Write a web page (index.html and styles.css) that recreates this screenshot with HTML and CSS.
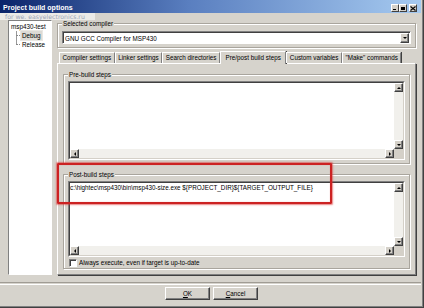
FILE: index.html
```html
<html>
  <head>
    <title>Project build options</title>
    <meta charset="UTF-8" />
    <link rel="stylesheet" href="styles.css">
  </head>
  <body>
    <div class="window">
      <div class="titlebar">
        <span class="title">Project build options</span>
        <div class="controls">
          <span class="ctl ctl-min"></span>
          <span class="ctl ctl-max"></span>
          <span class="ctl ctl-close">
            <svg width="6" height="5" viewBox="0 0 6 5"><path d="M0.5 0.5 L5.5 4.5 M5.5 0.5 L0.5 4.5" stroke="#000" stroke-width="1.1" /></svg>
          </span>
        </div>
      </div>

      <div class="client">
        <div class="main">
          <div class="tree">
            <div class="node root">msp430-test</div>
            <div class="children">
              <div class="node leaf"><span class="selected">Debug</span></div>
              <div class="node leaf"><span>Release</span></div>
            </div>
          </div>

          <div class="right">
            <div class="group compiler">
              <span class="legend">Selected compiler</span>
              <div class="combo">
                <span class="combo-text">GNU GCC Compiler for MSP430</span>
                <span class="arrow-btn down"></span>
              </div>
            </div>

            <div class="tabs">
              <span class="tab">Compiler settings</span>
              <span class="tab">Linker settings</span>
              <span class="tab">Search directories</span>
              <span class="tab active">Pre/post build steps</span>
              <span class="tab">Custom variables</span>
              <span class="tab">"Make" commands</span>
            </div>

            <div class="panel">
              <div class="group pre">
                <span class="legend">Pre-build steps</span>
                <div class="textbox grow">
                  <div class="textbox-inner">
                    <div class="text"></div>
                    <div class="vscroll">
                      <span class="arrow-btn up"></span>
                      <span class="track"></span>
                      <span class="arrow-btn down"></span>
                    </div>
                    <div class="hscroll">
                      <span class="arrow-btn left"></span>
                      <span class="track"></span>
                      <span class="arrow-btn right"></span>
                    </div>
                    <div class="corner"></div>
                  </div>
                </div>
              </div>

              <div class="group post">
                <span class="legend">Post-build steps</span>
                <div class="textbox fixed">
                  <div class="textbox-inner">
                    <div class="text">c:\hightec\msp430\bin\msp430-size.exe ${PROJECT_DIR}${TARGET_OUTPUT_FILE}</div>
                    <div class="vscroll">
                      <span class="arrow-btn up"></span>
                      <span class="track"></span>
                      <span class="arrow-btn down"></span>
                    </div>
                    <div class="hscroll">
                      <span class="arrow-btn left"></span>
                      <span class="track"></span>
                      <span class="arrow-btn right"></span>
                    </div>
                    <div class="corner"></div>
                  </div>
                </div>
                <label class="check">
                  <span class="box"></span>
                  Always execute, even if target is up-to-date
                </label>
              </div>
            </div>
          </div>
        </div>

        <div class="separator"></div>

        <div class="buttons">
          <span class="button"><u>O</u>K</span>
          <span class="button"><u>C</u>ancel</span>
        </div>
      </div>

      <!-- annotations on top of the screenshot -->
      <div class="watermark">for we. easyelectronics.ru</div>
      <div class="highlight"></div>
    </div>
  </body>
</html>
```

FILE: styles.css
```css
body {
  margin: 0;
  background-color: #d4d0c8;
  font-family: "Liberation Sans", Arial, sans-serif;
  font-size: 6.3px;
  color: #000;
}

.window {
  position: relative;
  width: 424px;
  height: 308px;
  box-sizing: border-box;
  display: flex;
  flex-direction: column;
  background-color: #d6d3cc;
  border-right: 1px solid #404040;
  border-bottom: 1px solid #404040;
  padding-right: 2px;
  box-shadow: inset -1px -1px #808080;
  overflow: hidden;
}

/* title bar */

.titlebar {
  height: 13px;
  flex: none;
  display: flex;
  align-items: center;
  padding: 0 4px 0 3px;
  background: linear-gradient(to right, #0a246a 0%, #5a7fc0 45%, #a6caf0 100%);
}

.title {
  color: #fff;
  font-weight: bold;
  font-size: 7px;
  padding-top: 1px;
}

.controls {
  margin-left: auto;
  display: flex;
  align-self: flex-end;
  margin-bottom: 1px;
}

.ctl {
  width: 8px;
  height: 8px;
  box-sizing: border-box;
  background-color: #d4d0c8;
  border: 1px solid;
  border-color: #fff #404040 #404040 #fff;
  display: flex;
  align-items: center;
  justify-content: center;
}

.ctl-min::after {
  content: "";
  width: 3px;
  height: 1px;
  background: #000;
  margin-top: 3px;
  margin-right: 1px;
}

.ctl-max::after {
  content: "";
  width: 4px;
  height: 3px;
  border: 1px solid #000;
  border-top-width: 2px;
  box-sizing: border-box;
}

.ctl-close {
  margin-left: 2px;
}

/* client area */

.client {
  flex: 1;
  display: flex;
  flex-direction: column;
  padding: 7px 5px 7px 8px;
}

.main {
  flex: 1;
  display: flex;
  gap: 5px;
}

.tree {
  width: 44px;
  box-sizing: border-box;
  background-color: #fff;
  border: 1px solid;
  border-color: #808080 #fff #fff #808080;
  padding: 1px 0 0 2px;
}

.node {
  line-height: 9px;
  white-space: nowrap;
}

.children {
  margin-left: 5px;
  background: linear-gradient(#999, #999) no-repeat 0 0 / 1px calc(100% - 4px);
}

.leaf {
  display: flex;
  align-items: center;
}

.leaf::before {
  content: "";
  width: 4px;
  border-top: 1px dotted #888;
  margin-right: 1px;
}

.leaf span {
  padding: 0 1px;
}

.selected {
  background-color: #dcdad5;
  outline: 1px solid #e9e7e2;
}

.right {
  flex: 1;
  display: flex;
  flex-direction: column;
}

/* group boxes */

.group {
  display: flex;
  flex-direction: column;
  border: 1px solid #a9a59d;
  box-shadow: inset 1px 1px #fff, 1px 1px #fff;
  padding: 0 4px 3px 4px;
}

.legend {
  align-self: flex-start;
  margin: -4px 0 0 0;
  padding: 0 1px;
  line-height: 8px;
  background-color: #d6d3cc;
}

.compiler {
  margin-top: 3px;
}

.combo {
  margin-top: 3px;
  height: 13px;
  box-sizing: border-box;
  display: flex;
  align-items: center;
  background-color: #fff;
  border: 1px solid;
  border-color: #808080 #fff #fff #808080;
  box-shadow: inset 1px 1px #404040;
  padding: 1px 1px 0 2px;
}

.combo-text {
  flex: 1;
}

.combo .arrow-btn {
  height: 10px;
  margin-top: 0;
}

/* tabs */

.tabs {
  margin-top: 3px;
  height: 12px;
  display: flex;
  align-items: flex-end;
  padding-left: 2px;
  position: relative;
  z-index: 1;
}

.tab {
  height: 11px;
  box-sizing: border-box;
  padding: 0 2.5px;
  line-height: 10px;
  white-space: nowrap;
  border-top: 1px solid #fff;
  border-left: 1px solid #fff;
  border-right: 1px solid #808080;
  box-shadow: 1px 0 #404040;
}

.tab.active {
  height: 13px;
  margin-bottom: -1px;
  background-color: #d6d3cc;
  line-height: 11px;
  padding: 0 4.5px;
}

.panel {
  flex: 1;
  display: flex;
  flex-direction: column;
  border: 1px solid;
  border-color: #fff #808080 #808080 #fff;
  box-shadow: 1px 1px #404040;
  padding: 10px 5px 5px 5px;
}

.pre {
  flex: 1;
}

.post {
  margin-top: 10px;
  padding-bottom: 1px;
}

/* text areas */

.textbox {
  margin-top: 2px;
  display: flex;
  border: 1px solid;
  border-color: #808080 #fff #fff #808080;
}

.textbox.grow {
  flex: 1;
}

.textbox.fixed {
  height: 76px;
  box-sizing: border-box;
}

.textbox-inner {
  flex: 1;
  display: grid;
  grid-template-columns: 1fr 9px;
  grid-template-rows: 1fr 9px;
  background-color: #fff;
  border: 1px solid;
  border-color: #404040 #d4d0c8 #d4d0c8 #404040;
}

.text {
  padding: 1px 0 0 0;
  white-space: nowrap;
  line-height: 8px;
}

.vscroll,
.hscroll {
  display: flex;
  background-color: #f1f0ec;
}

.vscroll {
  flex-direction: column;
}

.track {
  flex: 1;
}

.corner {
  background-color: #d4d0c8;
}

.arrow-btn {
  width: 9px;
  height: 9px;
  flex: none;
  box-sizing: border-box;
  background-color: #d4d0c8;
  border: 1px solid;
  border-color: #fff #404040 #404040 #fff;
  box-shadow: inset -1px -1px #808080;
  display: flex;
  align-items: center;
  justify-content: center;
}

.arrow-btn::after {
  content: "";
  border: 2px solid transparent;
}

.arrow-btn.up::after {
  border-bottom-color: #000;
  border-top-width: 0;
}

.arrow-btn.down::after {
  border-top-color: #000;
  border-bottom-width: 0;
}

.arrow-btn.left::after {
  border-right-color: #000;
  border-left-width: 0;
}

.arrow-btn.right::after {
  border-left-color: #000;
  border-right-width: 0;
}

/* checkbox */

.check {
  margin-top: 1px;
  height: 9px;
  display: flex;
  align-items: center;
  gap: 2px;
  padding-left: 1px;
}

.box {
  width: 8px;
  height: 8px;
  box-sizing: border-box;
  background-color: #fff;
  border: 1px solid;
  border-color: #808080 #fff #fff #808080;
  box-shadow: inset 1px 1px #404040;
}

/* bottom buttons */

.separator {
  margin-top: 7px;
  height: 1px;
  border-top: 1px solid #a09c94;
  border-bottom: 1px solid #fff;
  margin-left: -8px;
  margin-right: -5px;
}

.buttons {
  margin-top: 2px;
  display: flex;
  justify-content: center;
  gap: 3px;
  padding-right: 1px;
}

.button {
  width: 45px;
  height: 13px;
  box-sizing: border-box;
  display: flex;
  align-items: center;
  justify-content: center;
  border: 1px solid;
  border-color: #fff #404040 #404040 #fff;
  box-shadow: inset -1px -1px #808080;
}

/* overlays */

.watermark {
  position: absolute;
  left: 0;
  top: 13px;
  width: 95px;
  height: 7px;
  padding-left: 5px;
  box-sizing: border-box;
  background-color: rgba(255, 255, 255, 0.55);
  color: #9ca7b8;
  font-family: "DejaVu Sans", sans-serif;
  font-size: 6.2px;
  line-height: 7px;
  white-space: nowrap;
}

.highlight {
  position: absolute;
  left: 57px;
  top: 163px;
  width: 275px;
  height: 41px;
  box-sizing: border-box;
  border: 2px solid #cc2222;
  border-radius: 1px;
  box-shadow: 0 0 1.5px 0.5px rgba(220, 50, 50, 0.6), inset 0 0 1px rgba(220, 50, 50, 0.6);
}
```
